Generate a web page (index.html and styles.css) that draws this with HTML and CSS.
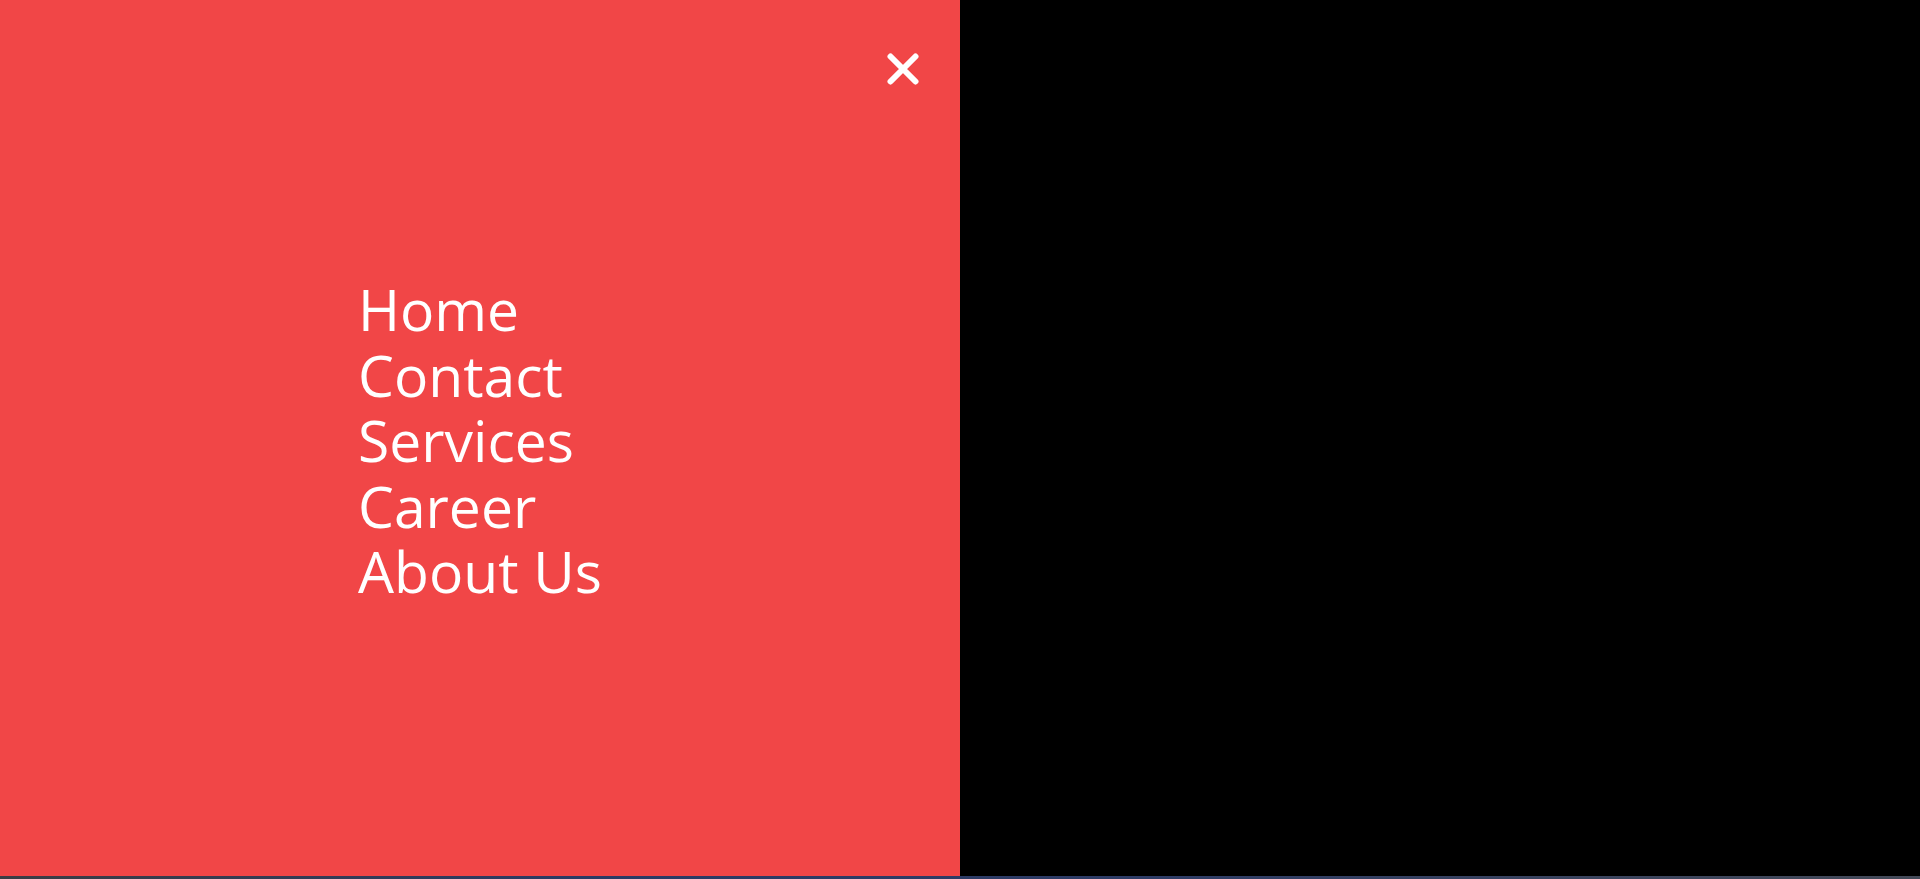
FILE: index.html
```html
<!DOCTYPE html>
<html>
<head>
<meta charset="utf-8">
<link rel="stylesheet" href="styles.css">
</head>
<body>
<div class="page">
  <aside class="panel">
    <button class="close" aria-label="Close">
      <svg width="32" height="32" viewBox="0 0 32 32"><path d="M3.5 3.5 L28.5 28.5 M28.5 3.5 L3.5 28.5" stroke="#fff" stroke-width="6" stroke-linecap="round" fill="none"/></svg>
    </button>
    <nav class="menu">
      <a href="#">Home</a>
      <a href="#">Contact</a>
      <a href="#">Services</a>
      <a href="#">Career</a>
      <a href="#">About Us</a>
    </nav>
  </aside>
  <div class="rest"></div>
</div>
<div class="strip"></div>
</body>
</html>
```
FILE: styles.css
```css
html, body {
  margin: 0;
  padding: 0;
  background: #000;
  overflow: hidden;
}
.page {
  display: flex;
  height: 876px;
}
.panel {
  position: relative;
  width: 960px;
  background: #f14647;
  box-sizing: border-box;
  padding: 277px 0 0 358px;
}
.rest {
  flex: 1;
  background: #000;
}
.close {
  position: absolute;
  top: 53px;
  right: 41px;
  width: 32px;
  height: 32px;
  padding: 0;
  border: 0;
  background: none;
  display: block;
}
.close svg { display: block; }
.menu {
  display: flex;
  flex-direction: column;
  align-items: flex-start;
}
.menu a {
  font-family: "Open Sans", "Noto Sans", sans-serif;
  font-size: 57px;
  line-height: 65.5px;
  color: #fff;
  text-decoration: none;
}
.strip {
  height: 3px;
  background: linear-gradient(90deg, #3b3d44 0%, #2b3a64 30%, #2e3c66 60%, #444a58 100%);
}
```
